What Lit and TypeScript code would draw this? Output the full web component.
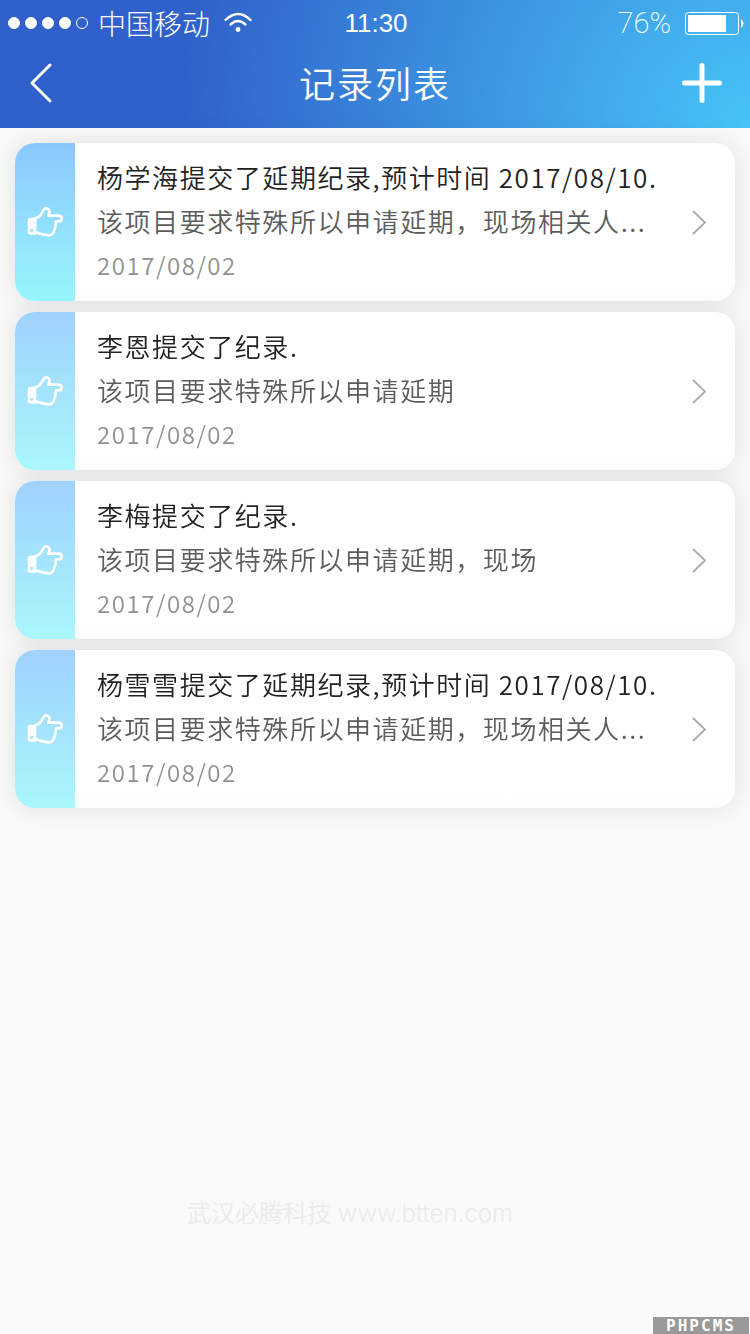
import { LitElement, html, css } from "lit";
import { customElement, property } from "lit/decorators.js";
import { classMap } from "lit/directives/class-map.js";

interface RecordItem {
  title: string;
  detail: string;
  date: string;
  fresh?: boolean;
}

const RECORDS: RecordItem[] = [
  {
    title: "杨学海提交了延期纪录,预计时间 2017/08/10.",
    detail: "该项目要求特殊所以申请延期，现场相关人...",
    date: "2017/08/02",
    fresh: true,
  },
  { title: "李恩提交了纪录.", detail: "该项目要求特殊所以申请延期", date: "2017/08/02" },
  { title: "李梅提交了纪录.", detail: "该项目要求特殊所以申请延期，现场", date: "2017/08/02" },
  {
    title: "杨雪雪提交了延期纪录,预计时间 2017/08/10.",
    detail: "该项目要求特殊所以申请延期，现场相关人...",
    date: "2017/08/02",
  },
];

@customElement("status-bar")
export class StatusBar extends LitElement {
  static styles = css`
    :host {
      display: grid;
      grid-template-columns: 1fr auto 1fr;
      align-items: center;
      height: 44px;
      padding: 0 6px 0 8px;
      color: #fff;
    }
    .left,
    .right {
      display: flex;
      align-items: center;
    }
    .right {
      justify-content: flex-end;
      gap: 14px;
    }
    .dots {
      display: flex;
      gap: 5px;
      margin-right: 10px;
    }
    .dot {
      box-sizing: border-box;
      width: 12px;
      height: 12px;
      border: 1px solid #fff;
      border-radius: 50%;
    }
    .full {
      background: #fff;
    }
    .carrier {
      font-size: 28px;
      line-height: 44px;
      font-weight: 300;
      margin-right: 13px;
    }
    .time {
      font-family: "Liberation Sans", Arial, sans-serif;
      font-size: 26px;
      line-height: 46px;
    }
    .percent {
      font-family: Roboto, "Liberation Sans", sans-serif;
      font-size: 29px;
      line-height: 46px;
      font-weight: 200;
    }
    svg {
      display: block;
    }
  `;

  render() {
    return html`
      <div class="left">
        <span class="dots">
          ${[1, 1, 1, 1, 0].map((on) => html`<i class=${classMap({ dot: true, full: !!on })}></i>`)}
        </span>
        <span class="carrier">中国移动</span>
        <svg width="30" height="22" viewBox="0 0 30 22" fill="none" stroke="#fff" stroke-width="2.400" stroke-linecap="round">
          <path d="M2.500 8Q15-4 27.500 8" />
          <path d="M7.500 12.500Q15 5.500 22.500 12.500" />
          <circle cx="15" cy="17.500" r="2.400" fill="#fff" stroke="none" />
        </svg>
      </div>
      <span class="time">11:30</span>
      <div class="right">
        <span class="percent">76%</span>
        <svg width="59" height="24" viewBox="0 0 59 24">
          <rect x="0.500" y="1.500" width="53" height="22" rx="3" fill="none" stroke="#fff" />
          <rect x="3" y="4" width="38" height="17" fill="#fff" />
          <path d="M56 8Q61 12.500 56 17Z" fill="#fff" />
        </svg>
      </div>
    `;
  }
}

@customElement("record-card")
export class RecordCard extends LitElement {
  @property({ attribute: false }) record!: RecordItem;

  static styles = css`
    :host {
      display: block;
    }
    .card {
      display: flex;
      border-radius: 20px;
      overflow: hidden;
      background: linear-gradient(#fff 88%, #fcfcfc);
      color: #222;
      text-decoration: none;
    }
    .strip {
      flex: 0 0 60px;
      display: flex;
      align-items: center;
      justify-content: center;
      background: linear-gradient(#9fd1fd, #a9f7fb);
    }
    .fresh {
      background: linear-gradient(#8ac8fd, #98f6fb);
    }
    .body {
      flex: 1;
      min-width: 0;
      padding: 12px 20px 14px 22px;
      line-height: 44px;
      font-size: 26px;
      letter-spacing: 0.06em;
      font-weight: 350;
    }
    .title,
    .detail,
    .date {
      margin: 0;
      font-weight: inherit;
      font-size: inherit;
      white-space: nowrap;
      overflow: hidden;
      text-overflow: ellipsis;
    }
    .detail {
      color: #5c5c5c;
    }
    .date {
      display: block;
      font-size: 24px;
      color: #909090;
    }
    .go {
      align-self: center;
      flex: none;
      margin-right: 28px;
    }
  `;

  render() {
    const r = this.record;
    return html`
      <a class="card" href="#">
        <span class=${classMap({ strip: true, fresh: !!r.fresh })}>
          <svg width="38" height="32" viewBox="35 44 114 96" fill="none" stroke="#fff" stroke-width="8" stroke-linejoin="round" stroke-linecap="round">
            <path d="M62 81Q74 79 80 69L88 56Q94 48 101 53Q107 58 105 64L102 73H134Q143 75 142 83Q141 90 133 90H125Q125 108 118 122Q113 133 102 132Q81 130 64 123" />
            <path fill="#fff" stroke="none" fill-rule="evenodd" d="M46 79H66V130H48Q40 130 40 122V85Q40 79 46 79ZM52 112A5 5 0 1 0 52 122A5 5 0 1 0 52 112Z" />
          </svg>
        </span>
        <div class="body">
          <h2 class="title">${r.title}</h2>
          <p class="detail">${r.detail}</p>
          <time class="date">${r.date}</time>
        </div>
        <svg class="go" width="16" height="26" viewBox="0 0 16 26" fill="none" stroke="#aaa" stroke-width="1.800">
          <path d="M2 2L14 13.500L2 25" />
        </svg>
      </a>
    `;
  }
}

@customElement("app-root")
export class AppRoot extends LitElement {
  static styles = css`
    :host {
      position: relative;
      display: flex;
      flex-direction: column;
      min-height: 100vh;
      background: #fafafa;
      font-family: "Noto Sans CJK SC", "Noto Sans", sans-serif;
    }
    .header {
      background: radial-gradient(circle at 100% 100%, #47c4f7, #3061ca 75%);
      color: #fff;
    }
    .nav {
      display: flex;
      align-items: center;
      justify-content: space-between;
      height: 78px;
      padding: 0 26px 6px;
    }
    .heading {
      margin: 0;
      padding-bottom: 2px;
      font-size: 36px;
      font-weight: 350;
      letter-spacing: 2px;
      line-height: 48px;
    }
    .action {
      display: flex;
      padding: 0;
      border: 0;
      background: none;
      cursor: pointer;
    }
    .list {
      display: flex;
      flex-direction: column;
      gap: 11px;
      margin: 0;
      padding: 15px;
      list-style: none;
      filter: drop-shadow(0 0 14px rgba(0, 0, 0, 0.1));
    }
    .footer {
      margin-top: auto;
      padding: 0 50px 102px 0;
      text-align: center;
      font-family: Inter, "Noto Sans CJK SC", sans-serif;
      font-size: 24px;
      font-weight: 350;
      line-height: 36px;
      color: #ebebeb;
    }
    .badge {
      position: absolute;
      right: 1px;
      bottom: 0;
      width: 96px;
      background: #999;
      color: #fff;
      font: bold 16px/17px "DejaVu Sans Mono", monospace;
      letter-spacing: 2px;
      text-align: center;
    }
  `;

  render() {
    return html`
      <header class="header">
        <status-bar></status-bar>
        <div class="nav">
          <button class="action" aria-label="返回">
            <svg width="44" height="44" viewBox="0 0 44 44" fill="none" stroke="#fff" stroke-width="3" stroke-linecap="round" stroke-linejoin="round">
              <path d="M24 4L6 22L24 40" />
            </svg>
          </button>
          <h1 class="heading">记录列表</h1>
          <button class="action" aria-label="添加">
            <svg width="44" height="44" viewBox="0 0 44 44" stroke="#fff" stroke-width="5" stroke-linecap="round">
              <path d="M22 4.500V39.500M4.500 22H39.500" />
            </svg>
          </button>
        </div>
      </header>
      <main>
        <ul class="list">
          ${RECORDS.map((r) => html`<li><record-card .record=${r}></record-card></li>`)}
        </ul>
      </main>
      <footer class="footer">武汉必腾科技 www.btten.com</footer>
      <span class="badge">PHPCMS</span>
    `;
  }
}
